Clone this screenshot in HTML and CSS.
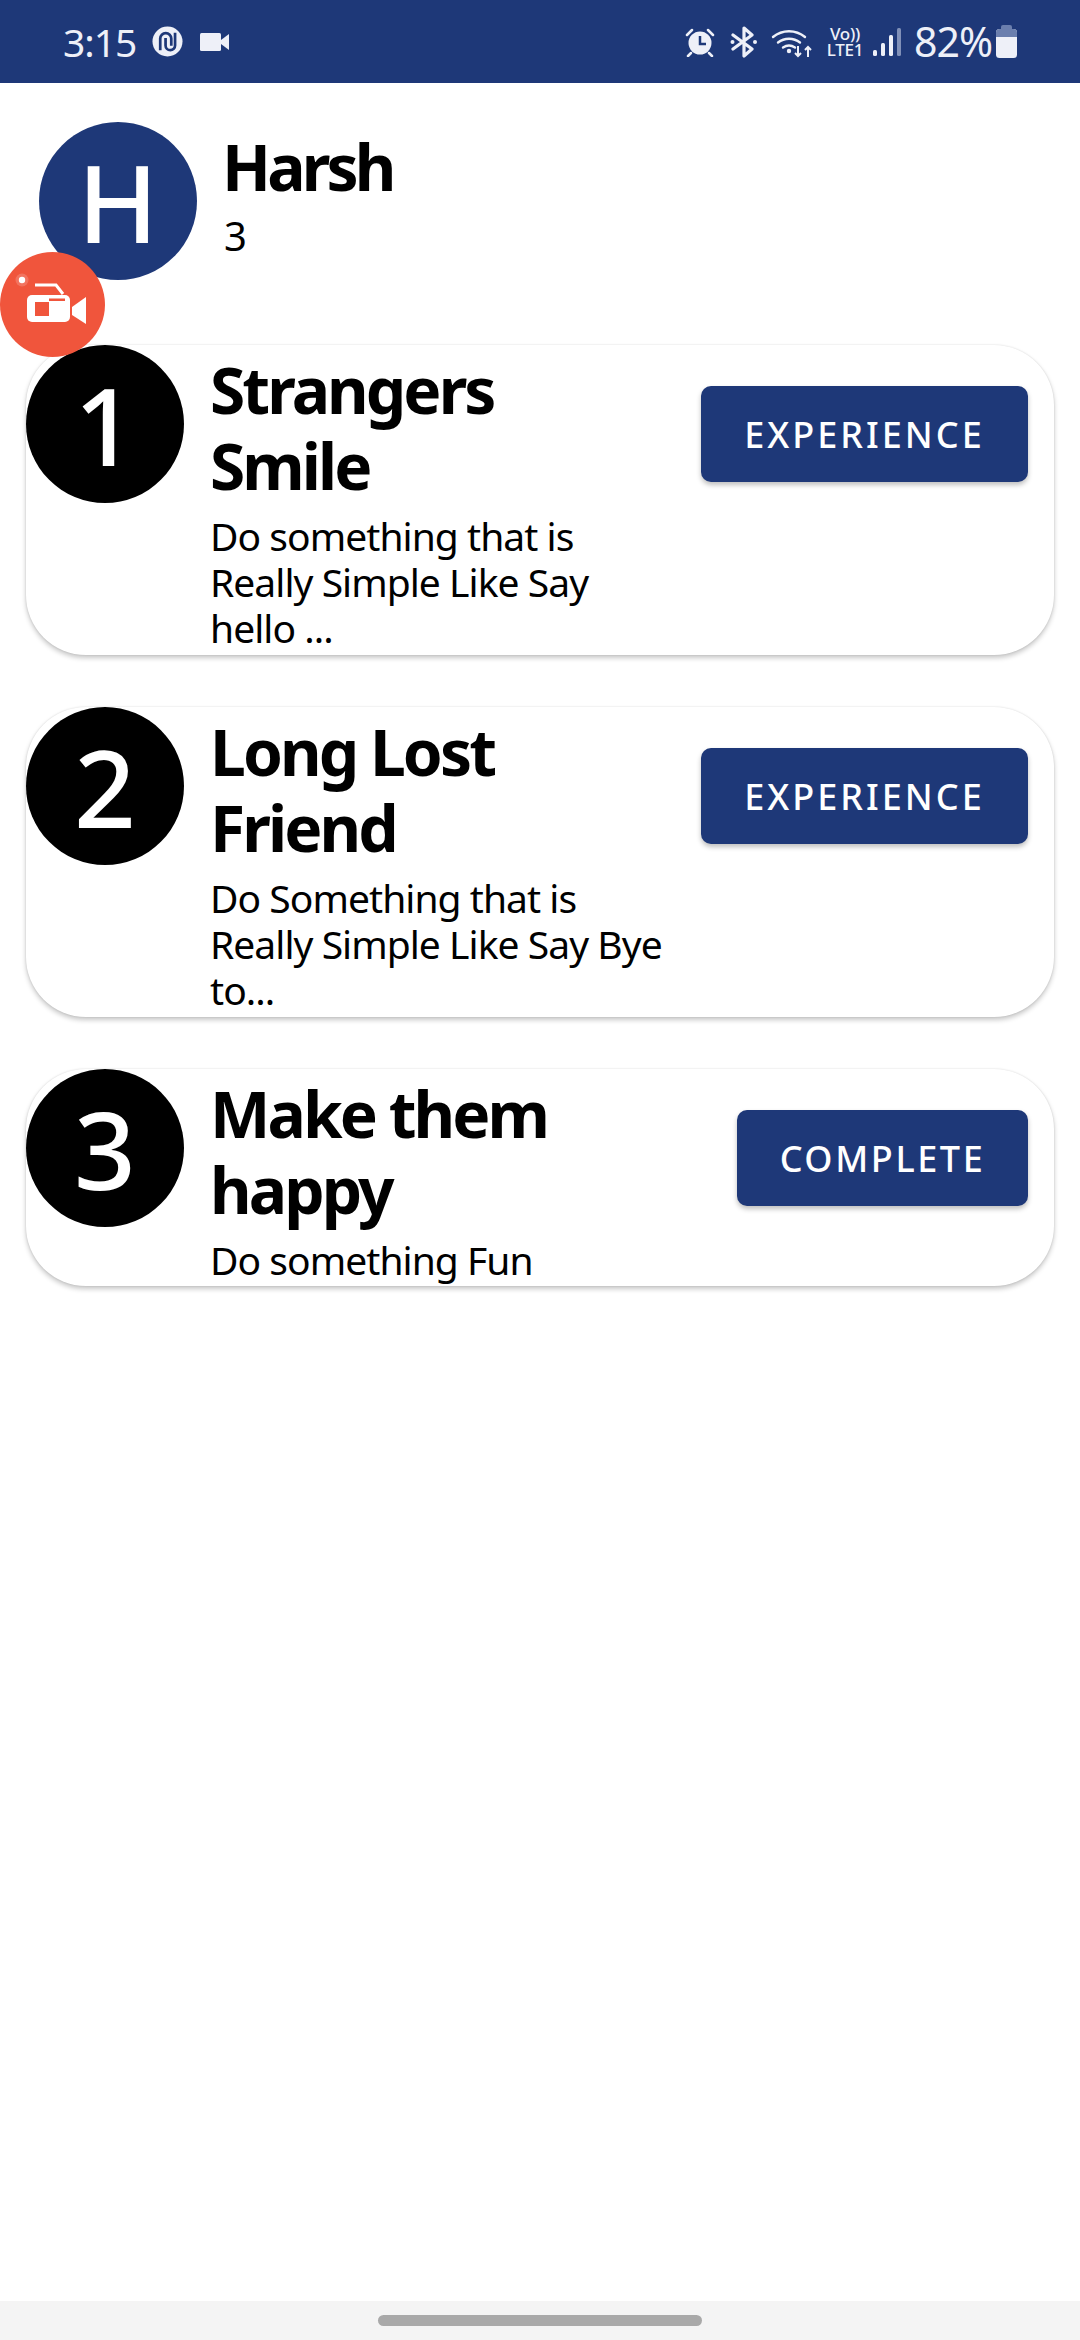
FILE: index.html
```html
<!DOCTYPE html>
<html lang="en">
<head>
<meta charset="utf-8">
<title>Challenges</title>
<link rel="stylesheet" href="styles.css">
</head>
<body>
<div class="screen">
  <header class="status">
    <div class="status-left">
      <span class="time">3:15</span>
      <svg class="ic-swirl" width="31" height="31" viewBox="0 0 32 32"><circle cx="16" cy="16" r="15.500" fill="#eef0f8"/><path d="M8.500 25V13a5.700 5.700 0 0 1 11.400 0v7.500" fill="none" stroke="#1e3878" stroke-width="2.800"/><path d="M14 12.500V20a4.900 4.900 0 0 0 9.800 0V7" fill="none" stroke="#1e3878" stroke-width="2.800"/></svg>
      <svg class="ic-video" width="30" height="20" viewBox="0 0 30 20"><rect x="0" y="1" width="21" height="18" rx="1.500" fill="#eef0f8"/><path d="M21 8l8-6v16l-8-6z" fill="#eef0f8"/></svg>
    </div>
    <div class="status-right">
      <svg class="ic-alarm" width="30" height="30" viewBox="0 0 30 30"><circle cx="15" cy="16" r="11.500" fill="#eef0f8"/><path d="M15 9v8h6" fill="none" stroke="#1e3878" stroke-width="2.500"/><path d="M2 8l5-5M28 8l-5-5M6 26l-3 3M24 26l3 3" stroke="#eef0f8" stroke-width="2.500" stroke-linecap="round"/></svg>
      <svg class="ic-bt" width="28" height="32" viewBox="0 0 28 32"><path d="M3 9l19 14-8 7V2l8 7L3 23" fill="none" stroke="#eef0f8" stroke-width="3.200" stroke-linejoin="round" stroke-linecap="round"/><circle cx="2.500" cy="16" r="2" fill="#eef0f8"/><circle cx="25" cy="16" r="2" fill="#eef0f8"/></svg>
      <svg class="ic-wifi" width="42" height="32" viewBox="0 0 42 32"><path d="M2 11a25 25 0 0 1 32 0M7 16.500a18 18 0 0 1 22 0M12 21.500a11 11 0 0 1 12 0" fill="none" stroke="#eef0f8" stroke-width="2.400" stroke-linecap="round"/><circle cx="18" cy="25" r="2.200" fill="#eef0f8"/><path d="M27 20v10M24 27l3 3 3-3M37 31V21M34 24l3-3 3 3" fill="none" stroke="#eef0f8" stroke-width="2"/></svg>
      <span class="volte"><span>Vo))</span><span>LTE1</span></span>
      <svg class="ic-signal" width="28" height="30" viewBox="0 0 28 30"><rect x="0" y="23" width="4" height="6" rx="1.500" fill="#eef0f8"/><rect x="8" y="16" width="4" height="13" rx="1.500" fill="#eef0f8"/><rect x="16" y="8" width="4" height="21" rx="1.500" fill="#eef0f8"/><rect x="24" y="1" width="4" height="28" rx="1.500" fill="#8090b8"/></svg>
      <span class="pct">82%</span>
      <svg class="ic-batt" width="21" height="33" viewBox="0 0 21 33"><rect x="5" y="0" width="11" height="6" rx="2" fill="#6b7fae"/><rect x="0" y="4" width="21" height="29" rx="3.500" fill="#eef0f8"/><path d="M0 12V7.500A3.500 3.500 0 0 1 3.500 4h14A3.500 3.500 0 0 1 21 7.500V12z" fill="#6b7fae"/></svg>
    </div>
  </header>

  <main class="content">
    <section class="profile">
      <div class="avatar">H</div>
      <div class="profile-text">
        <div class="profile-name">Harsh</div>
        <div class="profile-score">3</div>
      </div>
    </section>

    <article class="card card-tall">
      <div class="num">1</div>
      <div class="card-text">
        <h2 class="card-title">Strangers<br>Smile</h2>
        <p class="card-desc">Do something that is<br>Really Simple Like Say<br>hello ...</p>
      </div>
      <button class="action action-wide">EXPERIENCE</button>
    </article>

    <article class="card card-tall">
      <div class="num">2</div>
      <div class="card-text">
        <h2 class="card-title">Long Lost<br>Friend</h2>
        <p class="card-desc">Do Something that is<br>Really Simple Like Say Bye<br>to...</p>
      </div>
      <button class="action action-wide">EXPERIENCE</button>
    </article>

    <article class="card card-short">
      <div class="num">3</div>
      <div class="card-text">
        <h2 class="card-title">Make them<br>happy</h2>
        <p class="card-desc">Do something Fun</p>
      </div>
      <button class="action action-narrow">COMPLETE</button>
    </article>
  </main>

  <footer class="navbar"><div class="nav-pill"></div></footer>

  <div class="fab">
    <svg width="105" height="105" viewBox="0 0 105 105"><circle cx="22" cy="28" r="6.500" fill="#fff" fill-opacity=".18"/><circle cx="22" cy="28" r="3.200" fill="#fff"/><path d="M35 33h21l7 9" fill="none" stroke="#fff" stroke-width="3"/><path d="M27 48a5 5 0 0 1 5-5h33a5 5 0 0 1 5 5v17a5 5 0 0 1-5 5H32a5 5 0 0 1-5-5z" fill="#fff"/><path d="M72 55l14-10v27L72 63z" fill="#fff"/><rect x="35" y="50" width="14" height="14" fill="#f0553c"/><rect x="49" y="46.500" width="16" height="2.500" fill="#f0553c"/></svg>
  </div>
</div>
</body>
</html>
```
FILE: styles.css
```css
* { box-sizing: border-box; }
html, body { margin: 0; padding: 0; }
body { font-family: "Noto Sans", sans-serif; background: #fff; color: #000; }
.screen { position: relative; width: 1080px; height: 2340px; display: flex; flex-direction: column; overflow: hidden; }

.status { height: 83px; flex: none; background: #1e3878; color: #eef0f8; display: flex; justify-content: space-between; align-items: center; padding: 0 63px 0 63px; }
.status-left, .status-right { display: flex; align-items: center; }
.time { font-size: 39px; letter-spacing: -1px; line-height: 1; }
.ic-swirl { margin-left: 16px; }
.ic-video { margin-left: 17px; }
.ic-bt { margin-left: 15px; }
.ic-wifi { margin-left: 13px; }
.volte { margin-left: 12px; width: 40px; display: flex; flex-direction: column; align-items: center; font-size: 17px; font-weight: 500; line-height: 16px; letter-spacing: -0.3px; }
.ic-signal { margin-left: 8px; }
.pct { margin-left: 13px; font-size: 41px; letter-spacing: -1px; line-height: 1; }
.ic-batt { margin-left: 4px; }

.content { flex: 1; display: flex; flex-direction: column; }
.profile { display: flex; padding: 39px 0 0 39px; height: 262px; flex: none; }
.avatar { width: 158px; height: 158px; border-radius: 50%; background: #1e3878; color: #fff; font-size: 108px; font-weight: 500; display: flex; align-items: center; justify-content: center; flex: none; }
.profile-text { margin-left: 25px; padding-top: 7px; }
.profile-name { font-size: 64px; font-weight: 700; line-height: 76px; letter-spacing: -3.800px; }
.profile-score { font-size: 40px; line-height: 46px; margin: 8px 0 0 2px; }

.card { margin: 0 26px 52px; background: #fff; border-radius: 60px; box-shadow: 0 3px 5px rgba(0,0,0,.22), 0 0 2px rgba(0,0,0,.12); display: flex; align-items: flex-start; overflow: hidden; flex: none; }
.card-tall { height: 310px; }
.card-short { height: 217px; }
.num { width: 158px; height: 158px; border-radius: 50%; background: #000; color: #fff; font-size: 108px; font-weight: 500; display: flex; align-items: center; justify-content: center; flex: none; }
.card-text { margin-left: 26px; padding-top: 7px; flex: 1; min-width: 0; }
.card-title { margin: 0; font-size: 64px; font-weight: 700; line-height: 76px; letter-spacing: -2.900px; }
.card-desc { margin: 9px 0 0; font-size: 39px; line-height: 46px; letter-spacing: -0.950px; }
.action { margin: 41px 26px 0 0; height: 96px; padding: 0; background: #1e3878; color: #fff; border: 0; border-radius: 10px; font-family: inherit; font-size: 36px; font-weight: 500; box-shadow: 0 3px 5px rgba(0,0,0,.25); flex: none; }
.action-wide { width: 327px; letter-spacing: 3px; }
.action-narrow { width: 291px; letter-spacing: 2.600px; }

.navbar { height: 39px; flex: none; background: #f4f4f4; display: flex; justify-content: center; padding-top: 14px; }
.nav-pill { width: 324px; height: 11px; border-radius: 6px; background: #a9a9a9; }

.fab { position: absolute; left: 0; top: 252px; width: 105px; height: 105px; border-radius: 50%; background: #f0553c; }
.fab svg { display: block; }
```
